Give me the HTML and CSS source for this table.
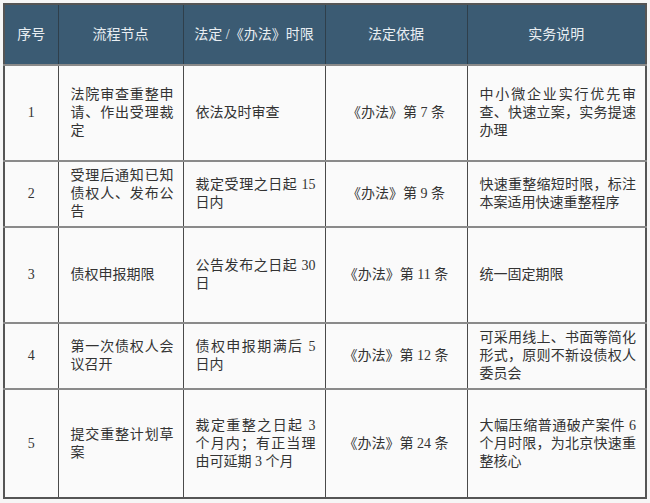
FILE: index.html
```html
<!DOCTYPE html>
<html lang="zh-CN">
<head>
<meta charset="utf-8">
<title>快速重整流程</title>
<link rel="stylesheet" href="styles.css">
</head>
<body>
<table class="flow">
  <colgroup>
    <col class="c-no">
    <col class="c-step">
    <col class="c-limit">
    <col class="c-basis">
    <col class="c-note">
  </colgroup>
  <thead>
    <tr class="r-head">
      <th>序号</th>
      <th>流程节点</th>
      <th>法定 /《办法》时限</th>
      <th>法定依据</th>
      <th>实务说明</th>
    </tr>
  </thead>
  <tbody>
    <tr class="r-tall">
      <td class="no">1</td>
      <td>法院审查重整申请、作出受理裁定</td>
      <td>依法及时审查</td>
      <td class="basis">《办法》第 7 条</td>
      <td>中小微企业实行优先审查、快速立案，实务提速办理</td>
    </tr>
    <tr class="r-short">
      <td class="no">2</td>
      <td>受理后通知已知债权人、发布公告</td>
      <td>裁定受理之日起 15 日内</td>
      <td class="basis">《办法》第 9 条</td>
      <td>快速重整缩短时限，标注本案适用快速重整程序</td>
    </tr>
    <tr class="r-tall">
      <td class="no">3</td>
      <td>债权申报期限</td>
      <td>公告发布之日起 30 日</td>
      <td class="basis">《办法》第 11 条</td>
      <td>统一固定期限</td>
    </tr>
    <tr class="r-short">
      <td class="no">4</td>
      <td>第一次债权人会议召开</td>
      <td>债权申报期满后 5 日内</td>
      <td class="basis">《办法》第 12 条</td>
      <td>可采用线上、书面等简化形式，原则不新设债权人委员会</td>
    </tr>
    <tr class="r-last">
      <td class="no">5</td>
      <td>提交重整计划草案</td>
      <td>裁定重整之日起 3 个月内；有正当理由可延期 3 个月</td>
      <td class="basis">《办法》第 24 条</td>
      <td>大幅压缩普通破产案件 6 个月时限，为北京快速重整核心</td>
    </tr>
  </tbody>
</table>
</body>
</html>
```

FILE: styles.css
```css
html, body {
  margin: 0;
  padding: 0;
  background: #f6f6f6;
}

body {
  padding: 3px;
  font-family: "Liberation Serif", "Noto Sans CJK SC", serif;
  font-size: 14px;
  line-height: 18px;
  color: #333333;
}

.flow {
  width: 642px;
  table-layout: fixed;
  border-collapse: collapse;
  border: 2px solid #555555;
}

.c-no { width: 54px; }
.c-step { width: 125px; }
.c-limit { width: 142px; }
.c-basis { width: 142px; }
.c-note { width: 179px; }

.flow th,
.flow td {
  border: 1px solid #4a4a4a;
  padding: 0 9px 0 12px;
  vertical-align: middle;
}

.flow th {
  background: #3b5b73;
  color: #e9eef2;
  font-weight: normal;
  text-align: center;
  white-space: nowrap;
  padding: 0 6px;
  border-color: #2f3f4b;
}

.flow td {
  background: #fafafa;
  text-align: justify;
}

.flow td.no,
.flow td.basis {
  text-align: center;
  padding: 0 6px;
}

.flow tbody tr {
  border-top: 2px solid #8a8a8a;
}

.r-head { height: 61px; }
.r-tall { height: 96px; }
.r-short { height: 66px; }
.r-last { height: 109px; }
```
